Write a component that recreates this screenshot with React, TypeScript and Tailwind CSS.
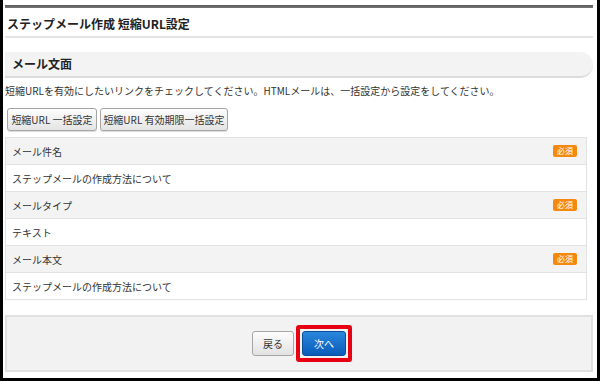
const font = { fontFamily: '"Noto Sans CJK JP", "Noto Sans", sans-serif' }

interface Field {
  label: string
  value: string
}

const fields: Field[] = [
  { label: 'メール件名', value: 'ステップメールの作成方法について' },
  { label: 'メールタイプ', value: 'テキスト' },
  { label: 'メール本文', value: 'ステップメールの作成方法について' },
]

function Badge() {
  return (
    <span className="flex h-[12px] w-[24px] items-center justify-center rounded-[2px] bg-[#f5890f] text-[8px] leading-none text-white">
      必須
    </span>
  )
}

function GrayButton({ label, className = '' }: { label: string; className?: string }) {
  return (
    <button
      className={`h-[23px] whitespace-nowrap rounded-[3px] border border-[#a6a6a6] bg-gradient-to-b from-[#fdfdfd] to-[#e4e4e4] px-0 text-[10px] leading-none text-[#333] shadow-[0_1px_1px_rgba(0,0,0,0.15)] ${className}`}
    >
      {label}
    </button>
  )
}

export default function App() {
  return (
    <div
      className="h-[381px] w-[600px] overflow-hidden border-x-[3px] border-b-[3px] border-black bg-white pl-[2px] pr-[4px] text-[#333]"
      style={font}
    >
      <div className="mt-[5px] h-[3px] bg-gradient-to-b from-[#5a5a5a] to-[#777]" />
      <div className="flex h-[30px] items-center border-b-2 border-[#e4e4e4] pl-[2px] pt-[4px] text-[12px] font-bold text-[#222]">
        ステップメール作成 短縮URL設定
      </div>

      <div className="mt-[14px] flex h-[26px] items-center rounded-r-[14px] border-b-2 border-[#dcdcdc] bg-[#f3f3f3] pl-[7px] text-[12px] font-bold text-[#222]">
        メール文面
      </div>

      <p className="mt-[5px] text-[10px] leading-[16px] text-[#333]">
        短縮URLを有効にしたいリンクをチェックしてください。HTMLメールは、一括設定から設定をしてください。
      </p>

      <div className="mt-[9px] flex gap-[3px] pl-[2px]">
        <GrayButton label="短縮URL 一括設定" className="w-[90px]" />
        <GrayButton label="短縮URL 有効期限一括設定" className="w-[128px]" />
      </div>

      <div className="mr-[6px] mt-[6px] border border-[#e2e2e2] border-b-0">
        {fields.map((f) => (
          <div key={f.label}>
            <div className="flex h-[27px] items-center justify-between border-b border-[#e2e2e2] bg-[#f3f3f3] pl-[6px] pr-[9px] text-[10px]">
              <span>{f.label}</span>
              <Badge />
            </div>
            <div className="flex h-[27px] items-center border-b border-[#e2e2e2] bg-white pl-[6px] text-[10px]">
              {f.value}
            </div>
          </div>
        ))}
      </div>

      <div className="mt-[15px] flex h-[57px] items-center justify-center gap-[2px] border-2 border-[#e0e0e0] bg-[#f2f2f2] pl-[6px]">
        <button className="h-[25px] w-[42px] rounded-[3px] border border-[#a6a6a6] bg-gradient-to-b from-[#fdfdfd] to-[#e2e2e2] text-[10px] text-[#333]">
          戻る
        </button>
        <div className="rounded-[3px] border-[4px] border-[#e60012] p-[2px]">
          <button className="flex h-[25px] w-[44px] items-center justify-center rounded-[3px] border border-[#0b4f9c] bg-gradient-to-b from-[#2a86dc] to-[#0a5cb8] text-[10px] text-white">
            次へ
          </button>
        </div>
      </div>
    </div>
  )
}
